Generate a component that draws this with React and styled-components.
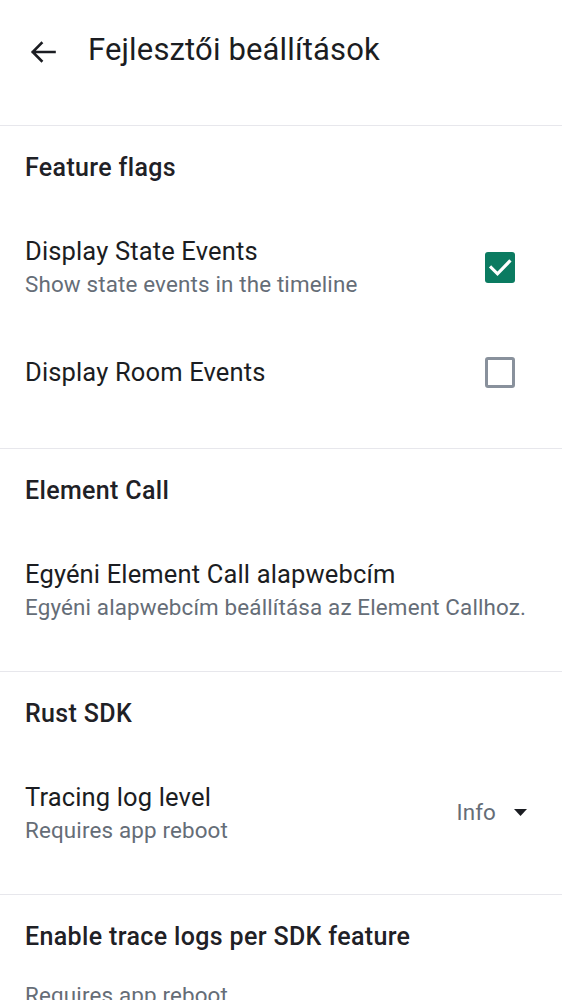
import React from "react";
import styled, { createGlobalStyle } from "styled-components";

const GlobalStyle = createGlobalStyle`
  html, body {
    margin: 0;
    padding: 0;
    background: #ffffff;
  }
  body {
    font-family: Roboto, "Noto Sans", "Liberation Sans", sans-serif;
    color: #1b1d22;
    -webkit-font-smoothing: antialiased;
  }
`;

const Page = styled.div`
  width: 562px;
  min-height: 1000px;
  background: #ffffff;
  overflow: hidden;
`;

const TopBar = styled.header`
  height: 100px;
  display: flex;
  align-items: center;
  margin-bottom: 25px;
`;

const BackButton = styled.button`
  width: 54px;
  height: 54px;
  margin-left: 16px;
  padding: 4px 0 0;
  border: none;
  background: transparent;
  display: flex;
  align-items: center;
  justify-content: center;
  color: #1b1d22;
`;

const Title = styled.h1`
  margin: 0 0 0 18px;
  font-size: 31px;
  line-height: 40px;
  font-weight: 400;
  letter-spacing: 0.15px;
  color: #1b1d22;
`;

const Section = styled.section`
  border-top: 1px solid #e7e7ec;
  padding-bottom: ${(p) => (p.$last ? "0" : "25px")};
`;

const SectionHeader = styled.h2`
  margin: 0;
  padding: 24px 25px 25px;
  font-size: 25px;
  line-height: 36px;
  font-weight: 500;
  letter-spacing: 0.35px;
  color: #1f2126;
`;

const Item = styled.div`
  display: flex;
  align-items: center;
  min-height: 100px;
  box-sizing: border-box;
  padding: 22px 25px 24px;
`;

const TextBlock = styled.div`
  flex: 1;
  display: flex;
  flex-direction: column;
  min-width: 0;
`;

const Headline = styled.div`
  font-size: 25.5px;
  line-height: 36px;
  font-weight: 400;
  letter-spacing: 0.15px;
  color: #1b1d22;
  white-space: nowrap;
`;

const Supporting = styled.div`
  font-size: 22.4px;
  line-height: 30px;
  font-weight: 400;
  letter-spacing: 0.15px;
  color: #656d77;
  white-space: nowrap;
  padding: ${(p) => (p.$standalone ? "0 25px" : "0")};
`;

const CheckBox = styled.div`
  width: 30px;
  height: 31px;
  box-sizing: border-box;
  margin-right: 22px;
  margin-top: ${(p) => (p.$checked ? "2px" : "0")};
  border-radius: 3px;
  display: flex;
  align-items: center;
  justify-content: center;
  background: ${(p) => (p.$checked ? "#0b7b61" : "transparent")};
  border: ${(p) => (p.$checked ? "none" : "3px solid #89919c")};
`;

const Dropdown = styled.div`
  display: flex;
  align-items: center;
  gap: 18px;
  margin-right: 10px;
`;

const DropdownValue = styled.span`
  font-size: 22.4px;
  line-height: 30px;
  letter-spacing: 0.15px;
  color: #656d77;
`;

const ArrowBack = () => (
  <svg width="26" height="22" viewBox="0 0 26 22" fill="none">
    <path
      d="M24.5 11H3 M11.5 2.2L2.7 11l8.8 8.8"
      stroke="#1b1d22"
      strokeWidth="2.6"
      strokeLinecap="square"
      strokeLinejoin="miter"
    />
  </svg>
);

const CheckMark = () => (
  <svg width="30" height="31" viewBox="0 0 30 31" fill="none">
    <path
      d="M6.2 15.6l6.3 6.2L24.3 9.6"
      stroke="#ffffff"
      strokeWidth="3.2"
      strokeLinecap="square"
    />
  </svg>
);

const Caret = () => (
  <svg width="13" height="7" viewBox="0 0 13 7">
    <path d="M0 0h13L6.5 7z" fill="#1b1d22" />
  </svg>
);

const Checkbox = ({ checked }) => (
  <CheckBox $checked={checked}>{checked && <CheckMark />}</CheckBox>
);

export default function App() {
  return (
    <Page>
      <GlobalStyle />
      <TopBar>
        <BackButton aria-label="Vissza">
          <ArrowBack />
        </BackButton>
        <Title>Fejlesztői beállítások</Title>
      </TopBar>

      <Section>
        <SectionHeader>Feature flags</SectionHeader>
        <Item>
          <TextBlock>
            <Headline>Display State Events</Headline>
            <Supporting>Show state events in the timeline</Supporting>
          </TextBlock>
          <Checkbox checked />
        </Item>
        <Item>
          <TextBlock>
            <Headline>Display Room Events</Headline>
          </TextBlock>
          <Checkbox checked={false} />
        </Item>
      </Section>

      <Section>
        <SectionHeader>Element Call</SectionHeader>
        <Item>
          <TextBlock>
            <Headline>Egyéni Element Call alapwebcím</Headline>
            <Supporting>Egyéni alapwebcím beállítása az Element Callhoz.</Supporting>
          </TextBlock>
        </Item>
      </Section>

      <Section>
        <SectionHeader>Rust SDK</SectionHeader>
        <Item>
          <TextBlock>
            <Headline>Tracing log level</Headline>
            <Supporting>Requires app reboot</Supporting>
          </TextBlock>
          <Dropdown>
            <DropdownValue>Info</DropdownValue>
            <Caret />
          </Dropdown>
        </Item>
      </Section>

      <Section $last>
        <SectionHeader>Enable trace logs per SDK feature</SectionHeader>
        <Supporting $standalone>Requires app reboot</Supporting>
      </Section>
    </Page>
  );
}
